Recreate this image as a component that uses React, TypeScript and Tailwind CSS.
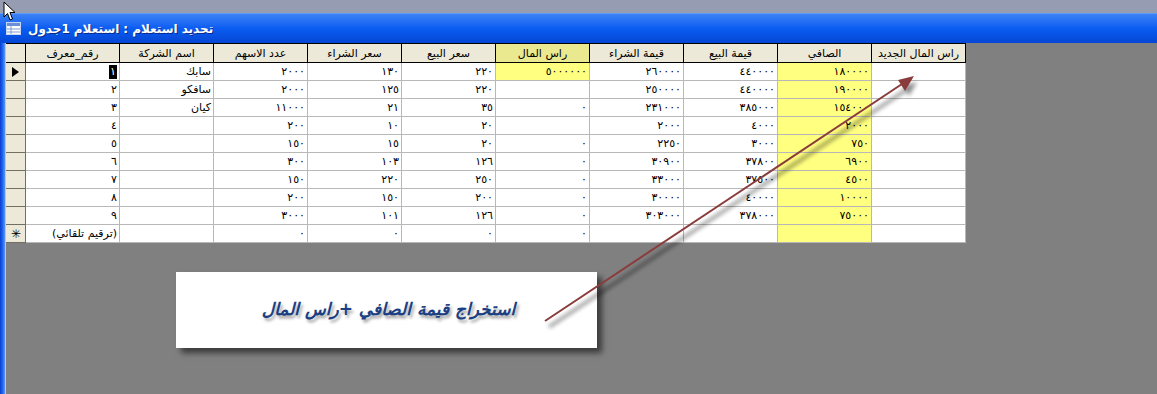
import React from 'react';

const headers = [
  'رقم_معرف',
  'اسم الشركة',
  'عدد الاسهم',
  'سعر الشراء',
  'سعر البيع',
  'راس المال',
  'قيمة الشراء',
  'قيمة البيع',
  'الصافي',
  'راس المال الجديد',
];

const rows: string[][] = [
  ['١', 'سابك', '٢٠٠٠', '١٣٠', '٢٢٠', '٥٠٠٠٠٠٠', '٢٦٠٠٠٠', '٤٤٠٠٠٠', '١٨٠٠٠٠', ''],
  ['٢', 'سافكو', '٢٠٠٠', '١٢٥', '٢٢٠', '', '٢٥٠٠٠٠', '٤٤٠٠٠٠', '١٩٠٠٠٠', ''],
  ['٣', 'كيان', '١١٠٠٠', '٢١', '٣٥', '٠', '٢٣١٠٠٠', '٣٨٥٠٠٠', '١٥٤٠٠٠', ''],
  ['٤', '', '٢٠٠', '١٠', '٢٠', '', '٢٠٠٠', '٤٠٠٠', '٢٠٠٠', ''],
  ['٥', '', '١٥٠', '١٥', '٢٠', '٠', '٢٢٥٠', '٣٠٠٠', '٧٥٠', ''],
  ['٦', '', '٣٠٠', '١٠٣', '١٢٦', '٠', '٣٠٩٠٠', '٣٧٨٠٠', '٦٩٠٠', ''],
  ['٧', '', '١٥٠', '٢٢٠', '٢٥٠', '٠', '٣٣٠٠٠', '٣٧٥٠٠', '٤٥٠٠', ''],
  ['٨', '', '٢٠٠', '١٥٠', '٢٠٠', '٠', '٣٠٠٠٠', '٤٠٠٠٠', '١٠٠٠٠', ''],
  ['٩', '', '٣٠٠٠', '١٠١', '١٢٦', '٠', '٣٠٣٠٠٠', '٣٧٨٠٠٠', '٧٥٠٠٠', ''],
  ['(ترقيم تلقائي)', '', '٠', '٠', '٠', '٠', '', '', '', ''],
];

function Cell({ text, col, row }: { text: string; col: number; row: number }) {
  const yellow = col === 8 || (col === 5 && row === 0);
  const selected = col === 0 && row === 0;
  return (
    <div
      dir="rtl"
      className={
        'h-[18px] border-r border-b border-[#b8b8b8] flex items-center pr-[2px] overflow-hidden whitespace-nowrap text-[11px] leading-none ' +
        (yellow ? 'bg-[#ffff80]' : 'bg-white')
      }
    >
      {selected ? (
        <span className="bg-black text-white px-[1px] h-[14px] flex items-center">{text}</span>
      ) : (
        <span>{text}</span>
      )}
    </div>
  );
}

export default function App() {
  return (
    <div
      dir="ltr"
      className="relative w-[1157px] h-[394px] overflow-hidden bg-[#808080] flex flex-col"
      style={{ fontFamily: '"DejaVu Sans", "Noto Sans", sans-serif' }}
    >
      {/* desktop strip */}
      <div className="h-[13px] bg-[#969cb1] shrink-0" />

      {/* title bar */}
      <div className="h-[30px] shrink-0 flex items-center pl-[6px] gap-[7px] bg-gradient-to-b from-[#3b82f4] via-[#0a5cf2] to-[#0646d4] border-t border-[#5e9cf8]">
        <svg width="15" height="13" viewBox="0 0 15 13">
          <rect x="0.5" y="0.5" width="14" height="12" fill="#ffffff" stroke="#c7d6f0" />
          <rect x="1" y="1" width="13" height="3" fill="#6a8fd8" />
          <line x1="1" y1="7" x2="14" y2="7" stroke="#7f9ad0" />
          <line x1="1" y1="10" x2="14" y2="10" stroke="#7f9ad0" />
          <line x1="5" y1="4" x2="5" y2="12" stroke="#7f9ad0" />
        </svg>
        <div className="flex items-center gap-[4px] text-white font-bold text-[12px] [text-shadow:1px_1px_0_#0a2a8a]">
          <span className="flex">
            <span>جدول</span>
            <span>1</span>
          </span>
          <span>استعلام</span>
          <span>:</span>
          <span>استعلام</span>
          <span>تحديد</span>
        </div>
      </div>

      <div className="flex flex-1">
        {/* window left frame */}
        <div className="w-[5px] bg-gradient-to-r from-[#0a3cc8] via-[#1e64f0] to-[#5b95f5] shrink-0" />
        <div className="w-[1px] bg-[#c9c6bb] shrink-0" />

        <div className="flex flex-col">
          {/* datasheet */}
          <div className="grid grid-cols-[20px_repeat(10,94px)] w-[960px] border-t border-black">
            <div className="h-[19px] bg-[#ece9d8] border-r border-b border-black" />
            {headers.map((h, i) => (
              <div
                key={h}
                dir="rtl"
                className={
                  'h-[19px] border-r border-b border-black flex items-center justify-center text-[11px] leading-none text-black whitespace-nowrap ' +
                  (i === 5 ? 'bg-[#ebe98f]' : 'bg-[#ece9d8]')
                }
              >
                {h}
              </div>
            ))}
            {rows.map((r, ri) => (
              <React.Fragment key={ri}>
                <div className="h-[18px] bg-[#ece9d8] border-r border-b border-[#716f64] flex items-center justify-center text-[11px] leading-none">
                  {ri === 0 ? (
                    <svg width="7" height="10" viewBox="0 0 7 10">
                      <path d="M0 0 L7 5 L0 10 Z" fill="#000" />
                    </svg>
                  ) : ri === rows.length - 1 ? (
                    <span className="text-[12px] font-light">✳</span>
                  ) : null}
                </div>
                {r.map((c, ci) => (
                  <Cell key={ci} text={c} col={ci} row={ri} />
                ))}
              </React.Fragment>
            ))}
          </div>

          {/* note box */}
          <div className="ml-[170px] mt-[29px] w-[421px] h-[76px] bg-white flex items-center justify-center shadow-[5px_5px_6px_rgba(0,0,0,0.55)]">
            <span
              dir="rtl"
              className="pl-[4px] text-[17px] font-bold italic text-[#1b3f82] [text-shadow:2px_3px_3px_rgba(0,0,0,0.35)]"
            >
              استخراج قيمة الصافي +راس المال
            </span>
          </div>
        </div>
      </div>

      {/* annotation arrow */}
      <svg className="absolute left-0 top-0 pointer-events-none" width="1157" height="394">
        <defs>
          <filter id="sh" x="-10%" y="-10%" width="120%" height="120%">
            <feGaussianBlur stdDeviation="2" />
          </filter>
        </defs>
        <g transform="translate(4 6)" opacity="0.45" filter="url(#sh)">
          <line x1="545" y1="321" x2="905" y2="82" stroke="#000" strokeWidth="3" />
          <path d="M913 76 L899 80 L905 90 Z" fill="#000" />
        </g>
        <line x1="545" y1="321" x2="905" y2="82" stroke="#8a3c3c" strokeWidth="2" />
        <path d="M914 76 L898 80 L905 91 Z" fill="#8a3c3c" />
      </svg>

      {/* mouse pointer */}
      <svg className="absolute left-[3px] top-[1px]" width="13" height="21" viewBox="0 0 13 21">
        <path d="M1 1 L1 16 L4.5 12.5 L7 19 L9.5 18 L7 11.5 L12 11.5 Z" fill="#fff" stroke="#000" strokeWidth="1" />
      </svg>
    </div>
  );
}
